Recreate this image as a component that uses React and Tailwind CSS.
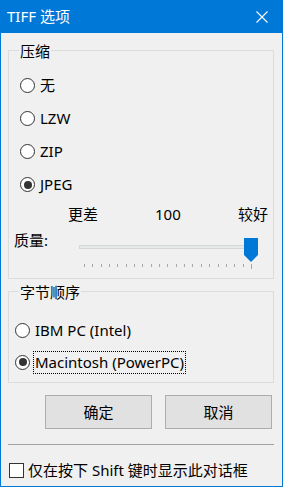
import React from 'react';

const Radio = ({ checked }) => (
  <span className="w-[15px] h-[15px] shrink-0 rounded-full border border-[#333333] bg-white flex items-center justify-center">
    {checked && <span className="w-[8px] h-[8px] rounded-full bg-[#333333]" />}
  </span>
);

const GroupLabel = ({ children }) => (
  <div className="-mt-[10px] ml-[10px] px-[1px] w-fit bg-[#f0f0f0] leading-[20px]">{children}</div>
);

const App = () => {
  const ticks = Array.from({ length: 21 });
  return (
    <div className="w-[283px] h-[487px] bg-[#0078d7] flex flex-col font-['Noto_Sans','Noto_Sans_CJK_SC',sans-serif] text-[15px] text-black">
      <div className="h-[33px] shrink-0 flex items-center justify-between pl-[7px] pr-[15px] text-white text-[15px]">
        <span>TIFF 选项</span>
        <svg width="12" height="12" viewBox="0 0 12 12" className="block">
          <path d="M0.5 0.5 L11.5 11.5 M11.5 0.5 L0.5 11.5" stroke="#ffffff" strokeWidth="1.1" fill="none" />
        </svg>
      </div>

      <div className="flex-1 mx-px mb-px bg-[#f0f0f0] flex flex-col">
        {/* 压缩 */}
        <div className="mt-[17px] ml-[7px] w-[266px] border border-[#dcdcdc] pb-[9px]">
          <GroupLabel>压缩</GroupLabel>
          <div className="mt-[8px] flex flex-col">
            {['无', 'LZW', 'ZIP', 'JPEG'].map((t, i) => (
              <div key={t} className="h-[33px] flex items-center pl-[11px] gap-[5px]">
                <Radio checked={i === 3} />
                <span>{t}</span>
              </div>
            ))}
          </div>
          <div className="mt-[3px] h-[20px] flex items-center leading-[20px]">
            <span className="ml-[59px] w-[87px]">更差</span>
            <span className="w-[83px]">100</span>
            <span>较好</span>
          </div>
          <div className="mt-[6px] flex">
            <span className="ml-[5px] w-[65px] leading-[20px]">质量:</span>
            <div className="relative w-[179px]">
              <div className="mt-[15px] h-[4px] bg-[#e7eaea] border border-[#d6d6d6]" />
              <div className="mt-[15px] ml-[5px] w-[168px] flex justify-between">
                {ticks.map((_, i) => (
                  <span key={i} className={`w-px bg-[#a8a8a8] ${i === 20 ? 'h-[5px]' : 'h-[3px]'}`} />
                ))}
              </div>
              <svg width="14" height="24" viewBox="0 0 14 24" className="absolute left-[165px] top-[8px]">
                <path d="M0 0 H14 V17 L7 24 L0 17 Z" fill="#0078d7" />
              </svg>
            </div>
          </div>
        </div>

        {/* 字节顺序 */}
        <div className="mt-[12px] ml-[7px] w-[266px] border border-[#dcdcdc] pb-[4px]">
          <GroupLabel>字节顺序</GroupLabel>
          <div className="mt-[12px] flex flex-col">
            <div className="h-[32px] flex items-center pl-[6px] gap-[3px]">
              <Radio />
              <span className="px-[1px] border border-transparent">IBM PC (Intel)</span>
            </div>
            <div className="h-[32px] flex items-center pl-[6px] gap-[3px]">
              <Radio checked />
              <span className="px-[1px] border border-dotted border-black leading-[21px]">Macintosh (PowerPC)</span>
            </div>
          </div>
        </div>

        <div className="mt-[12px] ml-[44px] flex gap-[13px]">
          <button className="w-[107px] h-[34px] bg-[#e1e1e1] border border-[#adadad]">确定</button>
          <button className="w-[107px] h-[34px] bg-[#e1e1e1] border border-[#adadad]">取消</button>
        </div>

        <div className="mt-[15px] ml-[7px] w-[266px] h-px bg-[#a0a0a0]" />

        <div className="mt-[18px] ml-[8px] flex items-center gap-[4px]">
          <span className="w-[15px] h-[15px] border border-[#333333] bg-white shrink-0" />
          <span className="leading-[15px]">仅在按下 Shift 键时显示此对话框</span>
        </div>
      </div>
    </div>
  );
};

export default App;
